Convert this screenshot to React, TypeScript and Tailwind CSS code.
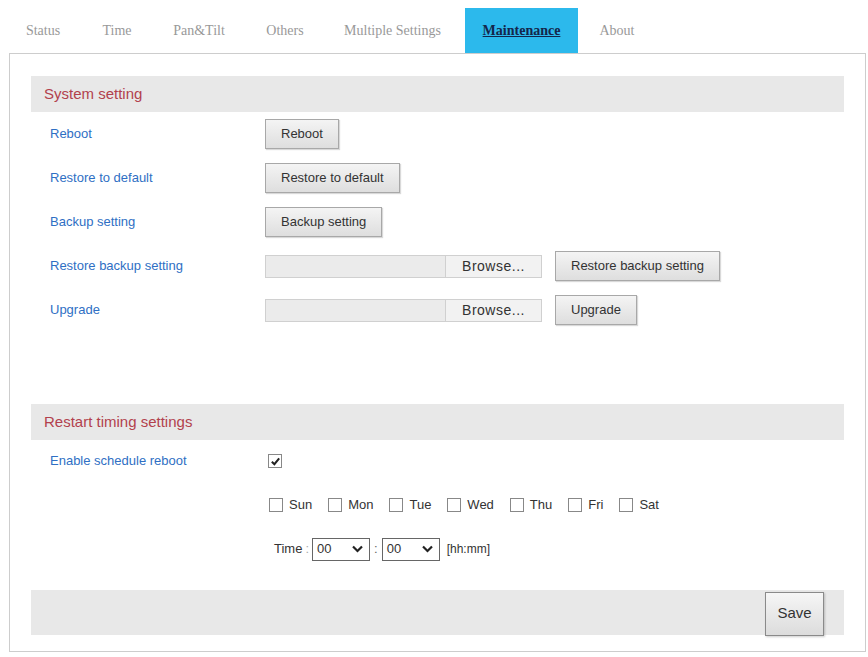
const tabs = [
  { name: "Status", w: "w-[86px]" },
  { name: "Time", w: "w-[62px]" },
  { name: "Pan&Tilt", w: "w-[102px]" },
  { name: "Others", w: "w-[70px]" },
  { name: "Multiple Settings", w: "w-[145px]" },
  { name: "Maintenance", w: "w-[113px]", active: true },
  { name: "About", w: "w-[78px]" },
];

const days = ["Sun", "Mon", "Tue", "Wed", "Thu", "Fri", "Sat"];

function SectionHeader({ title }: { title: string }) {
  return (
    <div className="h-[36px] bg-[#e8e8e8] flex items-center pl-[13px] text-[15px] text-[#b2414d]">
      {title}
    </div>
  );
}

function Btn({ children, className = "" }: { children: React.ReactNode; className?: string }) {
  return (
    <button
      className={
        "h-[30px] px-[15px] border border-[#a8a8a8] bg-gradient-to-b from-[#f4f4f4] to-[#dedede] text-[13px] text-[#333] shadow-[1px_1px_1px_rgba(0,0,0,0.15)] " +
        className
      }
    >
      {children}
    </button>
  );
}

function FileInput() {
  return (
    <div className="flex h-[23px] border border-[#d0d0d0]">
      <div className="w-[179px] bg-[#ebebeb]" />
      <div className="w-[96px] border-l border-[#d0d0d0] bg-[#f2f2f2] flex items-center justify-center text-[14px] text-[#333] tracking-[0.5px]">
        Browse...
      </div>
    </div>
  );
}

function Row({ label, children }: { label: string; children: React.ReactNode }) {
  return (
    <div className="h-[44px] flex items-center">
      <div className="w-[234px] pl-[19px] text-[13px] text-[#2f6fc4]">{label}</div>
      <div className="flex items-center gap-[13px]">{children}</div>
    </div>
  );
}

function Box({ checked = false }: { checked?: boolean }) {
  return (
    <span className="w-[14px] h-[14px] border border-[#888] bg-white flex items-center justify-center">
      {checked && (
        <svg width="11" height="11" viewBox="0 0 12 12">
          <path d="M2 6.2 L4.8 9 L10 2.5" fill="none" stroke="#222" strokeWidth="2.2" />
        </svg>
      )}
    </span>
  );
}

function Select() {
  return (
    <div className="w-[58px] h-[23px] border border-[#666] bg-white flex items-center justify-between pl-[4px] pr-[6px] text-[13px] text-[#333]">
      <span>00</span>
      <svg width="11" height="8" viewBox="0 0 11 8">
        <path d="M1 1.5 L5.5 6 L10 1.5" fill="none" stroke="#222" strokeWidth="2.2" />
      </svg>
    </div>
  );
}

export default function App() {
  return (
    <div className="w-[868px] h-[657px] bg-white font-['Liberation_Sans',Arial,sans-serif] overflow-hidden">
      <div className="h-[53px] pt-[8px] flex">
        {tabs.map((t) => (
          <div
            key={t.name}
            className={
              t.w +
              " h-[45px] flex items-center justify-center font-['Liberation_Serif','Times_New_Roman',serif] text-[14px] " +
              (t.active ? "bg-[#2cb9ec] text-[#14264a] font-bold underline" : "text-[#999]")
            }
          >
            {t.name}
          </div>
        ))}
      </div>

      <div className="ml-[9px] w-[857px] h-[599px] border border-[#cdcdcd] px-[21px] pt-[22px]">
        <SectionHeader title="System setting" />
        <Row label="Reboot">
          <Btn>Reboot</Btn>
        </Row>
        <Row label="Restore to default">
          <Btn>Restore to default</Btn>
        </Row>
        <Row label="Backup setting">
          <Btn>Backup setting</Btn>
        </Row>
        <Row label="Restore backup setting">
          <FileInput />
          <Btn>Restore backup setting</Btn>
        </Row>
        <Row label="Upgrade">
          <FileInput />
          <Btn>Upgrade</Btn>
        </Row>

        <div className="mt-[72px]">
          <SectionHeader title="Restart timing settings" />
        </div>
        <div className="h-[42px] flex items-center">
          <div className="w-[234px] pl-[19px] text-[13px] text-[#2f6fc4]">Enable schedule reboot</div>
          <div className="ml-[3px]">
            <Box checked />
          </div>
        </div>
        <div className="h-[46px] flex items-center pl-[238px] gap-[16px] text-[13px] text-[#333]">
          {days.map((d) => (
            <label key={d} className="flex items-center gap-[6px]">
              <Box />
              <span>{d}</span>
            </label>
          ))}
        </div>
        <div className="h-[42px] flex items-center pl-[243px] text-[13px] text-[#333]">
          <span>Time</span>
          <span className="mx-[3px] text-[#aaa]">:</span>
          <Select />
          <span className="mx-[4px] text-[#666]">:</span>
          <Select />
          <span className="ml-[7px] text-[12px]">[hh:mm]</span>
        </div>

        <div className="mt-[20px] h-[45px] bg-[#e8e8e8] flex items-center justify-end pr-[20px]">
          <button className="w-[59px] h-[44px] mt-[2px] border border-[#8a8a8a] bg-gradient-to-b from-[#f6f6f6] to-[#dcdcdc] text-[15px] text-[#333] shadow-[1px_1px_2px_rgba(0,0,0,0.2)]">
            Save
          </button>
        </div>
      </div>
    </div>
  );
}
